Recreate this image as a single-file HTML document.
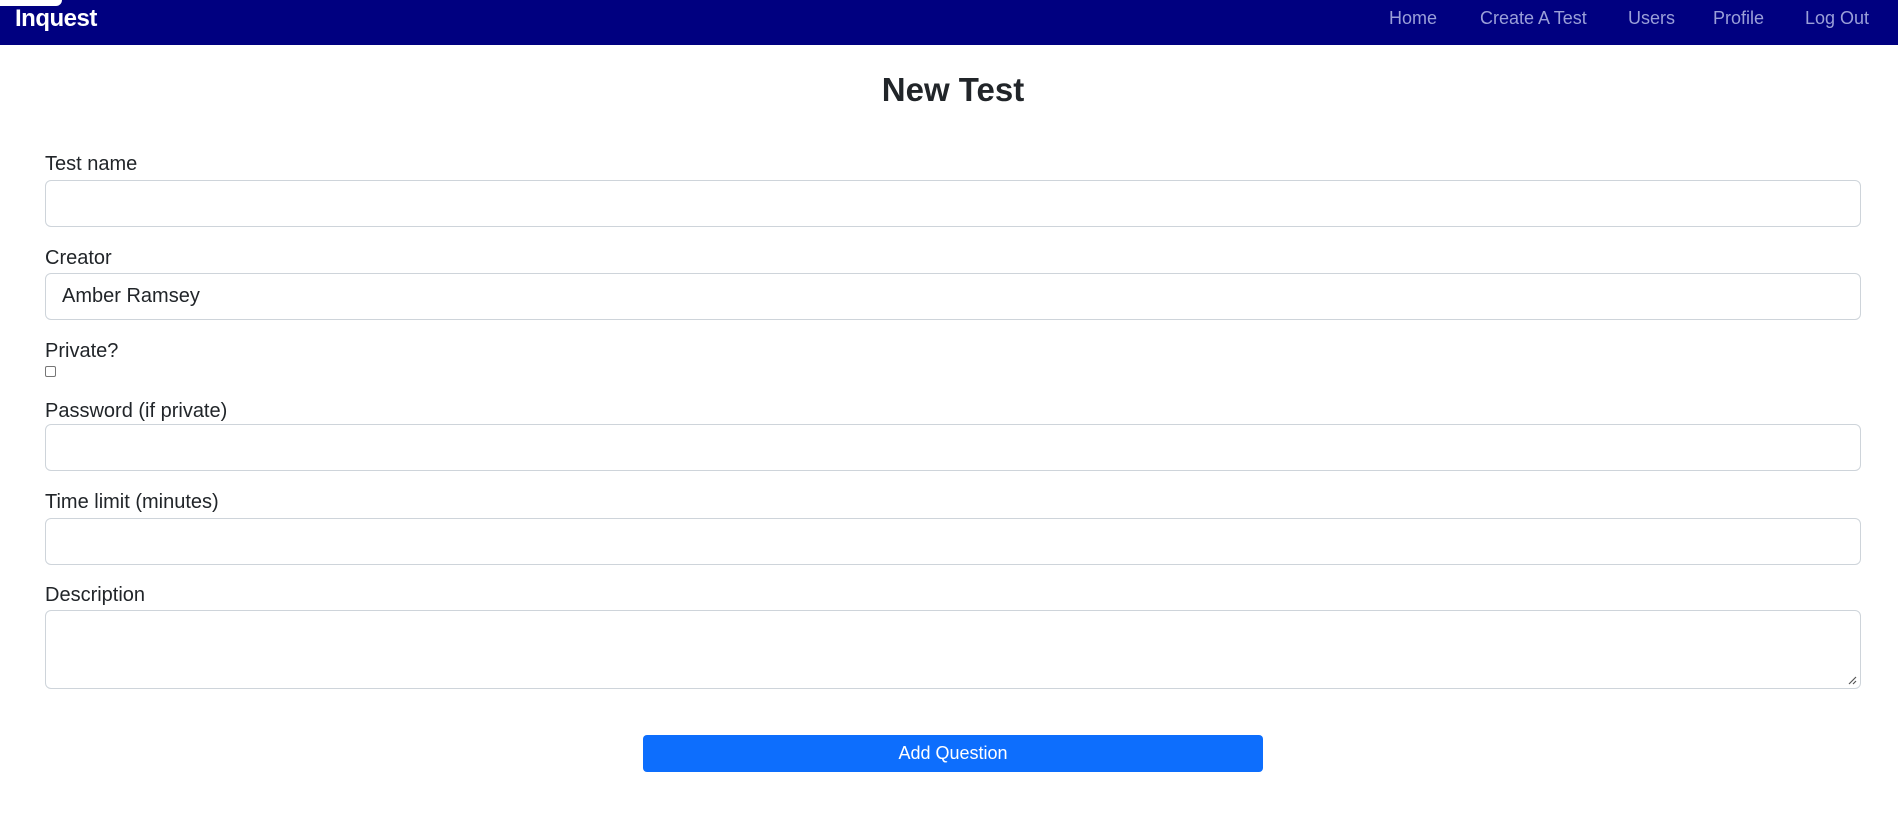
<!DOCTYPE html>
<html><head><style>
*{box-sizing:border-box;margin:0;padding:0}
body{width:1898px;height:822px;background:#fff;font-family:"Liberation Sans",Arial,sans-serif;color:#212529;position:relative;overflow:hidden}
.nav{position:absolute;left:0;top:0;width:1898px;height:45px;background:#000080}
.tab{position:absolute;left:0;top:0;width:62px;height:6px;background:#fff;border-bottom-right-radius:6px}
.logo{position:absolute;left:15px;top:5px;font-size:24px;font-weight:bold;color:#fff;letter-spacing:-0.5px}
.nav a{position:absolute;top:8px;font-size:18px;color:#9a9fd8;text-decoration:none}
h1{position:absolute;left:0;width:1906px;text-align:center;top:71px;font-size:33px;font-weight:600;color:#212529}
.lbl{position:absolute;left:45px;font-size:20px}
.inp{position:absolute;left:45px;width:1816px;border:1px solid #ced4da;border-radius:6px;background:#fff}
.cb{position:absolute;left:45px;top:366px;width:11px;height:11px;border:1px solid #767676;border-radius:2px}
.btn{position:absolute;left:643px;top:735px;width:620px;height:37px;background:#0d6efd;border-radius:4px;color:#fff;font-size:18px;text-align:center;line-height:37px}
</style></head><body>
<div class="nav"><div class="tab"></div><div class="logo">Inquest</div>
<a style="left:1389px">Home</a><a style="left:1480px">Create A Test</a><a style="left:1628px">Users</a><a style="left:1713px">Profile</a><a style="left:1805px">Log Out</a></div>
<h1>New Test</h1>
<div class="lbl" style="top:153px">Test name</div>
<div class="inp" style="top:180px;height:47px"></div>
<div class="lbl" style="top:247px">Creator</div>
<div class="inp" style="top:273px;height:47px;font-size:20px;padding:11px 0 0 16px">Amber Ramsey</div>
<div class="lbl" style="top:340px">Private?</div>
<div class="cb"></div>
<div class="lbl" style="top:400px">Password (if private)</div>
<div class="inp" style="top:424px;height:47px"></div>
<div class="lbl" style="top:491px">Time limit (minutes)</div>
<div class="inp" style="top:518px;height:47px"></div>
<div class="lbl" style="top:584px">Description</div>
<div class="inp" style="top:610px;height:79px"><svg style="position:absolute;right:3px;bottom:3px" width="9" height="9"><path d="M1 8L8 1M5 8L8 5" stroke="#555" stroke-width="1.2"/></svg></div>
<div class="btn">Add Question</div>
</body></html>
